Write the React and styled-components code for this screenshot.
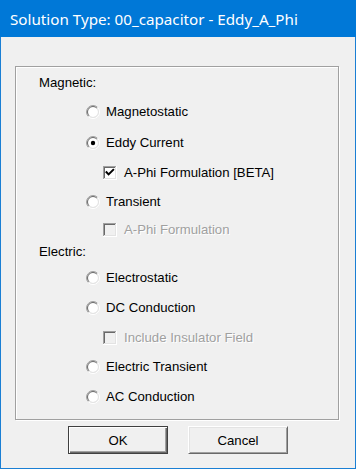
import React from "react";
import styled, { createGlobalStyle } from "styled-components";

const Global = createGlobalStyle`
  html, body { margin: 0; padding: 0; background: #f0f0f0; }
  * { box-sizing: border-box; }
`;

const Window = styled.div`
  width: 356px;
  height: 469px;
  border: 1px solid #1a7fd4;
  border-top: none;
  background: #f0f0f0;
  display: flex;
  flex-direction: column;
  font-family: "Liberation Sans", Arial, sans-serif;
  font-size: 13.2px;
  color: #000;
`;

const TitleBar = styled.div`
  height: 37px;
  margin: 0 -1px;
  background: #0078d7;
  color: #fff;
  display: flex;
  align-items: center;
  padding: 0 0 0 10px;
  font-family: "Noto Sans", "Open Sans", sans-serif;
  font-size: 15.2px;
  white-space: nowrap;
`;

const Body = styled.div`
  flex: 1;
  display: flex;
  flex-direction: column;
  padding: 29px 16px 0 14px;
`;

const GroupBox = styled.div`
  height: 354px;
  border: 1px solid #a0a0a0;
  box-shadow: inset 1px 1px 0 #fff, 1px 1px 0 #fff;
  display: flex;
  flex-direction: column;
`;

const Row = styled.div`
  height: 18px;
  display: flex;
  align-items: center;
  gap: ${(p) => p.$gap ?? 6}px;
  margin-top: ${(p) => p.$mt}px;
  padding-left: ${(p) => p.$indent}px;
  white-space: nowrap;
`;

const Label = styled.span`
  color: ${(p) => (p.$disabled ? "#a0a0a0" : "#000")};
  text-shadow: ${(p) => (p.$disabled ? "1px 1px 0 #fff" : "none")};
  line-height: 18px;
`;

const Buttons = styled.div`
  display: flex;
  justify-content: center;
  gap: 20px;
  margin-top: 6px;
  padding-left: 2px;
`;

const Button = styled.button`
  width: 100px;
  height: 28px;
  padding: 0;
  background: #f0f0f0;
  font-family: "Liberation Sans", Arial, sans-serif;
  font-size: 13.2px;
  color: #000;
  border: 1px solid;
  border-color: ${(p) =>
    p.$default ? "#404040" : "#fff #696969 #696969 #fff"};
  box-shadow: ${(p) =>
    p.$default
      ? "inset 1px 1px 0 #fff, inset -1px -1px 0 #696969, inset -2px -2px 0 #a0a0a0"
      : "inset 1px 1px 0 #e3e3e3, inset -1px -1px 0 #a0a0a0"};
`;

const Radio = ({ checked }) => {
  const c = 7;
  const arc = (r) => {
    const d = r * Math.SQRT1_2;
    return {
      tl: `M${c - d} ${c + d} A${r} ${r} 0 0 1 ${c + d} ${c - d}`,
      br: `M${c + d} ${c - d} A${r} ${r} 0 0 1 ${c - d} ${c + d}`,
    };
  };
  const o = arc(6.5);
  const i = arc(5.5);
  return (
    <svg width="14" height="14" viewBox="0 0 14 14">
      <circle cx="7" cy="7" r="5" fill="#fff" />
      <path d={o.tl} stroke="#a0a0a0" fill="none" />
      <path d={o.br} stroke="#fff" fill="none" />
      <path d={i.tl} stroke="#696969" fill="none" />
      <path d={i.br} stroke="#e3e3e3" fill="none" />
      {checked && <circle cx="7" cy="7" r="2.2" fill="#000" />}
    </svg>
  );
};

const Check = ({ checked, disabled }) => (
  <svg width="14" height="14" viewBox="0 0 14 14">
    <rect x="0" y="0" width="14" height="14" fill="#fff" />
    <rect x="0" y="0" width="13" height="13" fill="#a0a0a0" />
    <rect x="1" y="1" width="12" height="12" fill="#e3e3e3" />
    <rect x="1" y="1" width="11" height="11" fill="#696969" />
    <rect x="2" y="2" width="10" height="10" fill={disabled ? "#f0f0f0" : "#fff"} />
    {checked && (
      <path
        d="M3.5 6.2 L5.6 8.4 L10.2 3.8"
        stroke="#000"
        strokeWidth="2"
        fill="none"
        strokeLinecap="square"
      />
    )}
  </svg>
);

const rows = [
  { kind: "label", text: "Magnetic:", mt: 7 },
  { kind: "radio", text: "Magnetostatic", mt: 11 },
  { kind: "radio", text: "Eddy Current", mt: 13, checked: true },
  { kind: "check", text: "A-Phi Formulation [BETA]", mt: 12, checked: true },
  { kind: "radio", text: "Transient", mt: 11 },
  { kind: "check", text: "A-Phi Formulation", mt: 10, disabled: true },
  { kind: "label", text: "Electric:", mt: 4 },
  { kind: "radio", text: "Electrostatic", mt: 8 },
  { kind: "radio", text: "DC Conduction", mt: 12 },
  { kind: "check", text: "Include Insulator Field", mt: 12, disabled: true },
  { kind: "radio", text: "Electric Transient", mt: 11 },
  { kind: "radio", text: "AC Conduction", mt: 12 },
];

const indents = { label: 23, radio: 70, check: 87 };

export default function App() {
  return (
    <>
      <Global />
      <Window>
        <TitleBar>Solution Type: 00_capacitor - Eddy_A_Phi</TitleBar>
        <Body>
          <GroupBox>
            {rows.map((r, idx) => (
              <Row
                key={idx}
                $mt={r.mt}
                $indent={indents[r.kind]}
                $gap={r.kind === "check" ? 7 : 6}
              >
                {r.kind === "radio" && <Radio checked={r.checked} />}
                {r.kind === "check" && (
                  <Check checked={r.checked} disabled={r.disabled} />
                )}
                <Label $disabled={r.disabled}>{r.text}</Label>
              </Row>
            ))}
          </GroupBox>
          <Buttons>
            <Button $default>OK</Button>
            <Button>Cancel</Button>
          </Buttons>
        </Body>
      </Window>
    </>
  );
}
